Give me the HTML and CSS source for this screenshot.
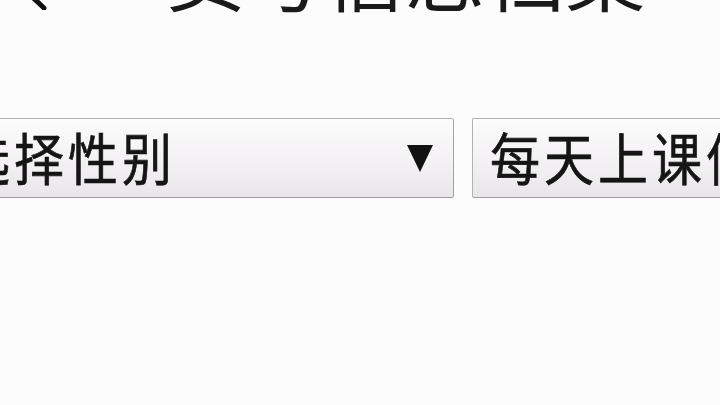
FILE: index.html
```html
<!DOCTYPE html>
<html lang="zh">
<head>
<meta charset="utf-8">
<title>货号信息档案</title>
<link rel="stylesheet" href="styles.css">
</head>
<body>
<div class="page">
  <header class="topbar">
    <svg class="back" width="50" height="70" viewBox="0 0 50 70" aria-hidden="true">
      <polyline points="44,4 10,36 44,68" fill="none" stroke="#111" stroke-width="5" stroke-linecap="round" stroke-linejoin="round"/>
    </svg>
    <h1 class="title">货号信息档案</h1>
  </header>
  <div class="form-row">
    <div class="select" role="combobox">
      <span class="label">选择性别</span>
      <svg class="caret" width="26" height="27" viewBox="0 0 26 27" aria-hidden="true">
        <polygon points="0,0 26,0 13,27" fill="#111"/>
      </svg>
    </div>
    <button class="btn" type="button"><span class="label">每天上课信息</span></button>
  </div>
</div>
</body>
</html>
```
FILE: styles.css
```css
html, body {
  margin: 0;
  padding: 0;
  background: #fdfcfd;
  overflow: hidden;
  width: 720px;
  height: 405px;
}

.page {
  font-family: "Noto Sans CJK SC", "Noto Sans", sans-serif;
  color: #1a1a1a;
}

.topbar {
  display: flex;
  align-items: flex-end;
  height: 100px;
  margin-top: -92px;
}

.back {
  flex: none;
  margin-bottom: -2px;
}

.title {
  margin: 0 0 0 115px;
  font-size: 80px;
  font-weight: normal;
  line-height: 80px;
  white-space: nowrap;
  position: relative;
  top: 2px;
}

.form-row {
  display: flex;
  gap: 18px;
  margin-top: 110px;
  margin-left: -54px;
  width: 1000px;
}

.select, .btn {
  box-sizing: border-box;
  height: 80px;
  border: 1px solid #b3b1b4;
  border-right-color: #a3a1a4;
  border-bottom-color: #9e9c9f;
  border-radius: 2px;
  background: linear-gradient(#fdfcfd 0%, #f3f1f3 55%, #e8e6e9 100%);
  display: flex;
  align-items: center;
  font-family: inherit;
  color: #151515;
  padding: 0;
}

.select {
  width: 508px;
  flex: none;
  justify-content: space-between;
  padding: 0 20px 0 13px;
}

.btn {
  width: 300px;
  flex: none;
  padding-left: 17px;
  overflow: hidden;
  white-space: nowrap;
}

.label {
  display: inline-block;
  font-size: 50px;
  letter-spacing: 4px;
  line-height: 1;
  -webkit-text-stroke: 0.6px #151515;
  transform: translateY(-3px) scaleY(1.12);
  white-space: nowrap;
}

.caret {
  flex: none;
  margin-top: 1px;
}
```
